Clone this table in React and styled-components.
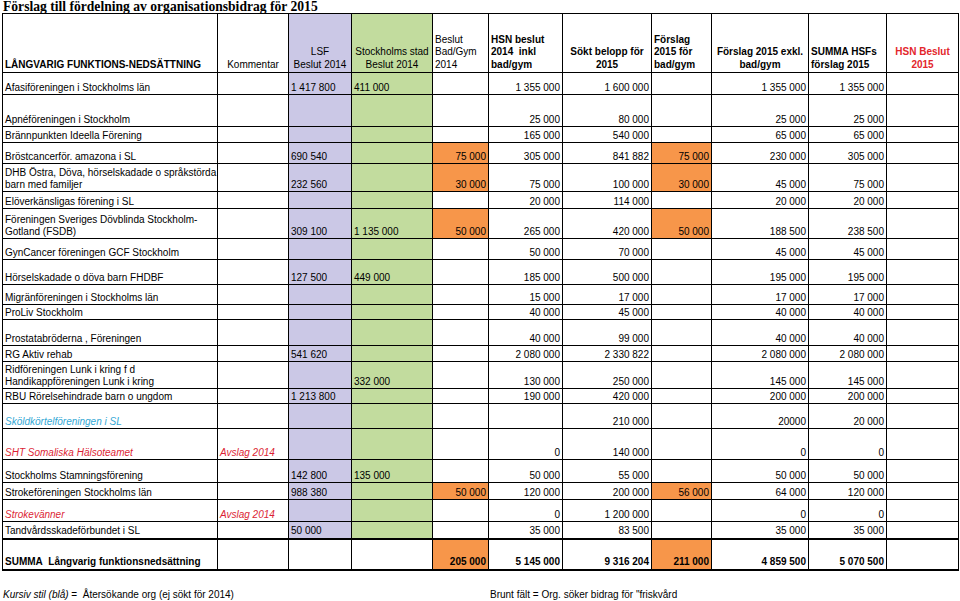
import React from 'react';
import styled, { createGlobalStyle } from 'styled-components';

const LAVENDER = '#cbc8e6';
const GREEN = '#c2dc9e';
const ORANGE = '#f7964a';

const GlobalStyle = createGlobalStyle`
  body {
    margin: 0;
    background: #fff;
    font-family: "Liberation Sans", Arial, sans-serif;
    color: #000;
  }
`;

const Page = styled.div`
  width: 960px;
  padding-left: 2px;
`;

const Title = styled.h1`
  margin: 0;
  padding-left: 1px;
  height: 13px;
  font-family: "Liberation Serif", "Times New Roman", serif;
  font-size: 13.6px;
  line-height: 13px;
  font-weight: bold;
  white-space: nowrap;
`;

const Sheet = styled.table`
  width: 956px;
  table-layout: fixed;
  border-collapse: collapse;
  font-size: 10px;
`;

const Row = styled.tr`
  height: ${(p) => p.$h}px;
`;

const HeadCell = styled.th`
  border: 1px solid #000;
  padding: 0 2px 1px;
  vertical-align: bottom;
  line-height: 12.5px;
  font-size: 10px;
  white-space: nowrap;
  overflow: hidden;
  text-align: ${(p) => p.$align || 'left'};
  font-weight: ${(p) => (p.$bold ? 'bold' : 'normal')};
  background: ${(p) => p.$bg || 'transparent'};
  color: ${(p) => p.$color || '#000'};
`;

const Cell = styled.td`
  border: 1px solid #000;
  border-top-width: ${(p) => (p.$total ? 2 : 1)}px;
  border-bottom-width: ${(p) => (p.$total ? 2 : 1)}px;
  padding: 0 2px 1px;
  vertical-align: bottom;
  line-height: 11.5px;
  white-space: nowrap;
  overflow: hidden;
  text-align: ${(p) => p.$align || 'left'};
  font-weight: ${(p) => (p.$bold ? 'bold' : 'normal')};
  font-style: ${(p) => (p.$italic ? 'italic' : 'normal')};
  background: ${(p) => p.$bg || 'transparent'};
  color: ${(p) => p.$color || '#000'};
`;

const Footer = styled.div`
  display: grid;
  grid-template-columns: 487px 1fr;
  margin-top: 18px;
  padding-left: 1px;
  font-size: 10px;
  line-height: 12px;
`;

const Note = styled.span`
  white-space: nowrap;
`;

const widths = [215, 71, 63, 81, 56, 74, 89, 60, 97, 78, 72];

const tone = {
  blue: '#33a8d5',
  red: '#dc1f35',
};

const rows = [
  { h: 22, name: ['Afasiföreningen i Stockholms län'], lsf: '1 417 800', stad: '411 000', hsn: '1 355 000', sokt: '1 600 000', exkl: '1 355 000', summa: '1 355 000' },
  { h: 32, name: ['Apnéföreningen i Stockholm'], hsn: '25 000', sokt: '80 000', exkl: '25 000', summa: '25 000' },
  { h: 16, name: ['Brännpunkten Ideella Förening'], hsn: '165 000', sokt: '540 000', exkl: '65 000', summa: '65 000' },
  { h: 21, name: ['Bröstcancerför. amazona i SL'], lsf: '690 540', bad: '75 000', hsn: '305 000', sokt: '841 882', fbad: '75 000', exkl: '230 000', summa: '305 000' },
  { h: 28, name: ['DHB Östra, Döva, hörselskadade o språkstörda', 'barn med familjer'], lsf: '232 560', bad: '30 000', hsn: '75 000', sokt: '100 000', fbad: '30 000', exkl: '45 000', summa: '75 000' },
  { h: 17, name: ['Elöverkänsligas förening i SL'], hsn: '20 000', sokt: '114 000', exkl: '20 000', summa: '20 000' },
  { h: 30, name: ['Föreningen Sveriges Dövblinda Stockholm-', 'Gotland (FSDB)'], lsf: '309 100', stad: '1 135 000', bad: '50 000', hsn: '265 000', sokt: '420 000', fbad: '50 000', exkl: '188 500', summa: '238 500' },
  { h: 21, name: ['GynCancer föreningen GCF Stockholm'], hsn: '50 000', sokt: '70 000', exkl: '45 000', summa: '45 000' },
  { h: 25, name: ['Hörselskadade o döva barn FHDBF'], lsf: '127 500', stad: '449 000', hsn: '185 000', sokt: '500 000', exkl: '195 000', summa: '195 000' },
  { h: 20, name: ['Migränföreningen i Stockholms län'], hsn: '15 000', sokt: '17 000', exkl: '17 000', summa: '17 000' },
  { h: 15, name: ['ProLiv Stockholm'], hsn: '40 000', sokt: '45 000', exkl: '40 000', summa: '40 000' },
  { h: 26, name: ['Prostatabröderna , Föreningen'], hsn: '40 000', sokt: '99 000', exkl: '40 000', summa: '40 000' },
  { h: 16, name: ['RG Aktiv rehab'], lsf: '541 620', hsn: '2 080 000', sokt: '2 330 822', exkl: '2 080 000', summa: '2 080 000' },
  { h: 27, name: ['Ridföreningen Lunk i kring f d', 'Handikappföreningen Lunk i kring'], stad: '332 000', hsn: '130 000', sokt: '250 000', exkl: '145 000', summa: '145 000' },
  { h: 15, name: ['RBU Rörelsehindrade barn o ungdom'], lsf: '1 213 800', hsn: '190 000', sokt: '420 000', exkl: '200 000', summa: '200 000' },
  { h: 25, name: ['Sköldkörtelföreningen i SL'], kind: 'blue', sokt: '210 000', exkl: '20000', summa: '20 000' },
  { h: 31, name: ['SHT Somaliska Hälsoteamet'], kind: 'red', comment: 'Avslag 2014', hsn: '0', sokt: '140 000', exkl: '0', summa: '0' },
  { h: 23, name: ['Stockholms Stamningsförening'], lsf: '142 800', stad: '135 000', hsn: '50 000', sokt: '55 000', exkl: '50 000', summa: '50 000' },
  { h: 17, name: ['Strokeföreningen Stockholms län'], lsf: '988 380', bad: '50 000', hsn: '120 000', sokt: '200 000', fbad: '56 000', exkl: '64 000', summa: '120 000' },
  { h: 22, name: ['Strokevänner'], kind: 'red', comment: 'Avslag 2014', hsn: '0', sokt: '1 200 000', exkl: '0', summa: '0' },
  { h: 17, name: ['Tandvårdsskadeförbundet i SL'], lsf: '50 000', hsn: '35 000', sokt: '83 500', exkl: '35 000', summa: '35 000' },
];

const total = {
  h: 31,
  name: ['SUMMA\u00a0 Långvarig funktionsnedsättning'],
  bad: '205 000',
  hsn: '5 145 000',
  sokt: '9 316 204',
  fbad: '211 000',
  exkl: '4 859 500',
  summa: '5 070 500',
};

const Lines = ({ lines }) =>
  lines.map((line, i) => (
    <React.Fragment key={i}>
      {i > 0 && <br />}
      {line}
    </React.Fragment>
  ));

const DataRow = ({ r, isTotal }) => {
  const color = r.kind ? tone[r.kind] : undefined;
  const italic = !!r.kind;
  return (
    <Row $h={r.h}>
      <Cell $total={isTotal} $bold={isTotal} $italic={italic} $color={color}>
        <Lines lines={r.name} />
      </Cell>
      <Cell $total={isTotal} $italic={italic} $color={color}>{r.comment}</Cell>
      <Cell $total={isTotal} $bg={isTotal ? undefined : LAVENDER}>{r.lsf}</Cell>
      <Cell $total={isTotal} $bg={isTotal ? undefined : GREEN}>{r.stad}</Cell>
      <Cell $total={isTotal} $bold={isTotal} $align="right" $bg={r.bad ? ORANGE : undefined}>{r.bad}</Cell>
      <Cell $total={isTotal} $bold={isTotal} $align="right">{r.hsn}</Cell>
      <Cell $total={isTotal} $bold={isTotal} $align="right">{r.sokt}</Cell>
      <Cell $total={isTotal} $bold={isTotal} $align="right" $bg={r.fbad ? ORANGE : undefined}>{r.fbad}</Cell>
      <Cell $total={isTotal} $bold={isTotal} $align="right">{r.exkl}</Cell>
      <Cell $total={isTotal} $bold={isTotal} $align="right">{r.summa}</Cell>
      <Cell $total={isTotal} />
    </Row>
  );
};

export default function App() {
  return (
    <Page>
      <GlobalStyle />
      <Title>Förslag till fördelning av organisationsbidrag för 2015</Title>
      <Sheet>
        <colgroup>
          {widths.map((w, i) => (
            <col key={i} style={{ width: w }} />
          ))}
        </colgroup>
        <thead>
          <Row $h={59}>
            <HeadCell $bold>LÅNGVARIG FUNKTIONS-NEDSÄTTNING</HeadCell>
            <HeadCell $align="center">Kommentar</HeadCell>
            <HeadCell $align="center" $bg={LAVENDER}>LSF<br />Beslut 2014</HeadCell>
            <HeadCell $align="center" $bg={GREEN}>Stockholms stad<br />Beslut 2014</HeadCell>
            <HeadCell>Beslut<br />Bad/Gym<br />2014</HeadCell>
            <HeadCell $bold>HSN beslut<br />2014&nbsp; inkl<br />bad/gym</HeadCell>
            <HeadCell $bold $align="center">Sökt belopp för<br />2015</HeadCell>
            <HeadCell $bold>Förslag<br />2015 för<br />bad/gym</HeadCell>
            <HeadCell $bold $align="center">Förslag 2015 exkl.<br />bad/gym</HeadCell>
            <HeadCell $bold>SUMMA HSFs<br />förslag 2015</HeadCell>
            <HeadCell $bold $align="center" $color="#e3262b">HSN Beslut<br />2015</HeadCell>
          </Row>
        </thead>
        <tbody>
          {rows.map((r, i) => (
            <DataRow key={i} r={r} />
          ))}
          <DataRow r={total} isTotal />
        </tbody>
      </Sheet>
      <Footer>
        <Note>
          <i>Kursiv stil (blå)</i> = &nbsp;Återsökande org (ej sökt för 2014)
        </Note>
        <Note>Brunt fält = Org. söker bidrag för "friskvård</Note>
      </Footer>
    </Page>
  );
}
